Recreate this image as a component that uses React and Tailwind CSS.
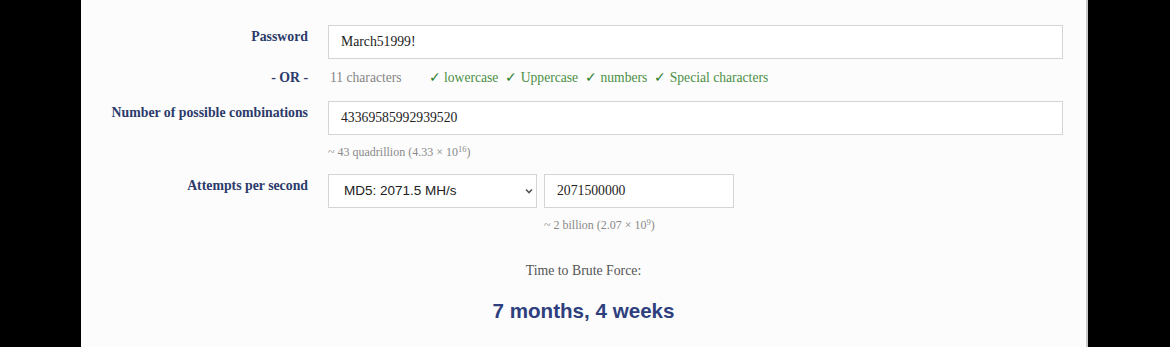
import React, { useState } from 'react';

const Label = ({ children }) => (
    <div className="text-right font-bold text-[13.8px] leading-5 text-[#2b3a6b] pt-[2px]">
        {children}
    </div>
);

const Check = ({ children }) => (
    <span className="text-[#4a8f45] mr-[7px]">
        <span className="text-[#2f7d2f]">✓</span> {children}
    </span>
);

const App = () => {
    const [password, setPassword] = useState('March51999!');
    const [rate, setRate] = useState('2071500000');

    return (
        <div className="flex h-[347px] w-[1170px] bg-black" style={{ fontFamily: '"Liberation Serif", serif' }}>
            <div className="w-[81px] shrink-0" />
            <div className="w-[1007px] shrink-0 bg-[#fcfcfc] border-r-2 border-[#c8c8c8] pt-[25px] pr-[23px]">
                <div className="grid grid-cols-[227px_1fr] gap-x-5">
                    <Label>Password</Label>
                    <input
                        value={password}
                        onChange={(e) => setPassword(e.target.value)}
                        className="h-[34px] w-full bg-white border border-[#d4d4d4] px-3 text-[13.7px] text-[#222] outline-none"
                        style={{ fontFamily: '"Liberation Serif", serif' }}
                    />

                    <div className="text-right font-bold text-[13.8px] leading-5 text-[#2b3a6b] mt-[9px]">- OR -</div>
                    <div className="text-[13.6px] leading-5 mt-[9px] pl-[2px] text-[#858585]">
                        <span className="mr-[27px]">11 characters</span>
                        <Check>lowercase</Check>
                        <Check>Uppercase</Check>
                        <Check>numbers</Check>
                        <Check>Special characters</Check>
                    </div>

                    <div className="mt-[13px]"><Label>Number of possible combinations</Label></div>
                    <div className="mt-[13px]">
                        <div className="h-[34px] w-full bg-white border border-[#d4d4d4] px-3 flex items-center text-[13.7px] text-[#222]">
                            43369585992939520
                        </div>
                        <div className="text-[12px] leading-4 text-[#8a8a8a] mt-[9px]">
                            ~ 43 quadrillion (4.33 × 10<sup className="text-[8.5px]">16</sup>)
                        </div>
                    </div>

                    <div className="mt-[14px]"><Label>Attempts per second</Label></div>
                    <div className="mt-[14px] flex gap-[7px]">
                        <div className="relative w-[209px]">
                            <select
                                className="h-[34px] w-full appearance-none bg-white border border-[#d4d4d4] pl-[15px] text-[13.5px] text-[#222] outline-none"
                                style={{ fontFamily: '"Liberation Sans", Arial, sans-serif' }}
                                defaultValue="md5"
                            >
                                <option value="md5">MD5: 2071.5 MH/s</option>
                            </select>
                            <svg className="absolute right-[3px] top-[13px] pointer-events-none" width="10" height="8" viewBox="0 0 10 8">
                                <path d="M2 2.5 L5 5.5 L8 2.5" fill="none" stroke="#555" strokeWidth="1.6" />
                            </svg>
                        </div>
                        <div>
                            <input
                                value={rate}
                                onChange={(e) => setRate(e.target.value)}
                                className="h-[34px] w-[190px] bg-white border border-[#d4d4d4] px-3 text-[13.7px] text-[#222] outline-none"
                                style={{ fontFamily: '"Liberation Serif", serif' }}
                            />
                            <div className="text-[12px] leading-4 text-[#8a8a8a] mt-[9px]">
                                ~ 2 billion (2.07 × 10<sup className="text-[8.5px]">9</sup>)
                            </div>
                        </div>
                    </div>
                </div>

                <div className="text-center pl-[23px] mt-[28px] text-[13.8px] leading-5 text-[#555]">Time to Brute Force:</div>
                <div
                    className="text-center pl-[23px] mt-[18px] text-[20.6px] leading-6 font-bold text-[#2e3f7e]"
                    style={{ fontFamily: '"Liberation Sans", Arial, sans-serif' }}
                >
                    7 months, 4 weeks
                </div>
            </div>
        </div>
    );
};

export default App;
